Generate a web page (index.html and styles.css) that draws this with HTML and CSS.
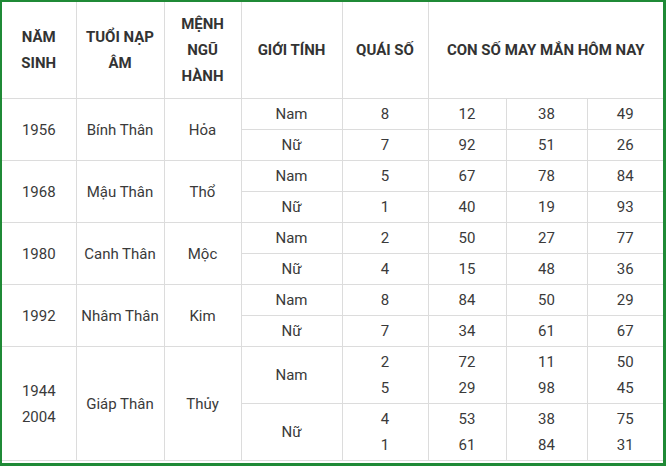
FILE: index.html
```html
<!DOCTYPE html>
<html lang="vi">
<head>
<meta charset="utf-8">
<link rel="stylesheet" href="styles.css">
</head>
<body>
<div class="frame">
<table class="lucky">
<colgroup>
<col class="c1"><col class="c2"><col class="c3"><col class="c4"><col class="c5"><col class="c6"><col class="c7"><col class="c8">
</colgroup>
<thead>
<tr class="head">
<th class="first">NĂM<br>SINH</th>
<th>TUỔI NẠP<br>ÂM</th>
<th>MỆNH<br>NGŨ<br>HÀNH</th>
<th>GIỚI TÍNH</th>
<th>QUÁI SỐ</th>
<th colspan="3">CON SỐ MAY MẮN HÔM NAY</th>
</tr>
</thead>
<tbody>
<tr><td rowspan="2" class="first">1956</td><td rowspan="2">Bính Thân</td><td rowspan="2">Hỏa</td><td>Nam</td><td>8</td><td>12</td><td>38</td><td>49</td></tr>
<tr><td>Nữ</td><td>7</td><td>92</td><td>51</td><td>26</td></tr>
<tr><td rowspan="2" class="first">1968</td><td rowspan="2">Mậu Thân</td><td rowspan="2">Thổ</td><td>Nam</td><td>5</td><td>67</td><td>78</td><td>84</td></tr>
<tr><td>Nữ</td><td>1</td><td>40</td><td>19</td><td>93</td></tr>
<tr><td rowspan="2" class="first">1980</td><td rowspan="2">Canh Thân</td><td rowspan="2">Mộc</td><td>Nam</td><td>2</td><td>50</td><td>27</td><td>77</td></tr>
<tr><td>Nữ</td><td>4</td><td>15</td><td>48</td><td>36</td></tr>
<tr><td rowspan="2" class="first">1992</td><td rowspan="2">Nhâm Thân</td><td rowspan="2">Kim</td><td>Nam</td><td>8</td><td>84</td><td>50</td><td>29</td></tr>
<tr><td>Nữ</td><td>7</td><td>34</td><td>61</td><td>67</td></tr>
<tr class="tall"><td rowspan="2" class="first">1944<br>2004</td><td rowspan="2">Giáp Thân</td><td rowspan="2">Thủy</td><td>Nam</td><td>2<br>5</td><td>72<br>29</td><td>11<br>98</td><td>50<br>45</td></tr>
<tr class="tall"><td>Nữ</td><td>4<br>1</td><td>53<br>61</td><td>38<br>84</td><td>75<br>31</td></tr>
</tbody>
</table>
</div>
</body>
</html>
```

FILE: styles.css
```css
html, body {
  margin: 0;
  padding: 0;
  background: #fff;
}
.frame {
  box-sizing: border-box;
  width: 666px;
  height: 466px;
  border-style: solid;
  border-color: #1f8a36;
  border-width: 2px 3px 3px 2px;
  overflow: hidden;
  background: #fff;
}
.lucky {
  border-collapse: collapse;
  table-layout: fixed;
  width: 661px;
  font-family: Roboto, "Liberation Sans", Arial, sans-serif;
  color: #3a3a3a;
}
.c1 { width: 74px; }
.c2 { width: 88px; }
.c3 { width: 77px; }
.c4 { width: 101px; }
.c5 { width: 86px; }
.c6 { width: 78px; }
.c7 { width: 81px; }
.c8 { width: 76px; }
.lucky th,
.lucky td {
  border: 1px solid #dcdcdc;
  text-align: center;
  vertical-align: middle;
  padding: 2px 2px;
  line-height: 26px;
  font-size: 15px;
}
.lucky th {
  font-weight: 700;
  color: #333;
  padding: 9px 2px;
  border-top: none;
}
.lucky .first {
  border-left: none;
}
.lucky tr > :last-child {
  border-right: none;
}
.head {
  height: 96px;
}
.lucky tbody tr {
  height: 31px;
}
.lucky tbody tr.tall {
  height: 57px;
}
```
